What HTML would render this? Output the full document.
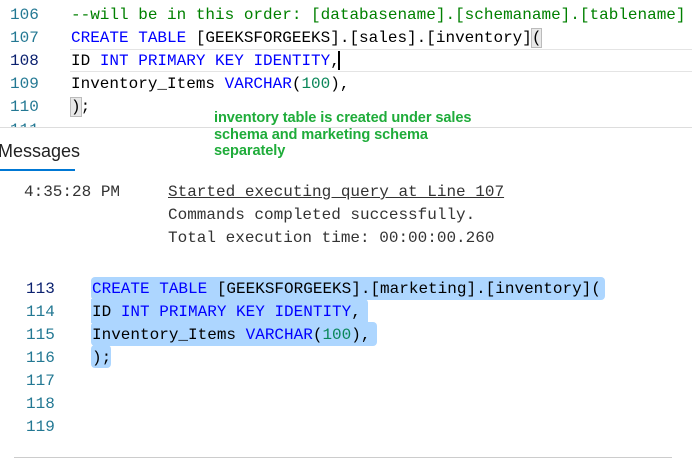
<!DOCTYPE html>
<html><head><style>
body{margin:0;width:692px;height:471px;background:#fff;position:relative;overflow:hidden;font-family:"Liberation Mono",monospace;font-size:16px}
.l{position:absolute;white-space:pre;line-height:23px;height:23px}
.n{color:#237893}
.k{color:#0000ff}.c{color:#008000}.g{color:#098658}.t{color:#000}
.m{color:#333}
.sel{position:absolute;background:#add6ff;border-radius:4px}
.ann{position:absolute;left:214px;font-family:"Liberation Sans",sans-serif;font-weight:bold;font-size:14.6px;color:#1fac3a;line-height:16.5px;letter-spacing:-0.1px}
</style></head><body>
<div class="l n" style="left:10px;top:4px">106</div>
<div class="l c" style="left:71px;top:4px">--will be in this order: [databasename].[schemaname].[tablename]</div>
<div class="l n" style="left:10px;top:27px">107</div>
<div class="l" style="left:71px;top:27px"><span class="k">CREATE TABLE</span> [GEEKSFORGEEKS].[sales].[inventory]<span style="background:#e8e8e8;outline:1px solid #bbb">(</span></div>
<div style="position:absolute;left:70px;top:49px;width:622px;height:21px;border-top:1px solid #e4e4e4;border-bottom:1px solid #e4e4e4"></div>
<div class="l n" style="left:10px;top:50px;color:#0b216f">108</div>
<div class="l" style="left:71px;top:50px">ID <span class="k">INT PRIMARY KEY IDENTITY</span>,</div>
<div style="position:absolute;left:338px;top:51px;width:2px;height:19px;background:#000"></div>
<div class="l n" style="left:10px;top:73px">109</div>
<div class="l" style="left:71px;top:73px">Inventory_Items <span class="k">VARCHAR</span>(<span class="g">100</span>),</div>
<div class="l n" style="left:10px;top:96px">110</div>
<div class="l" style="left:71px;top:96px"><span style="background:#e8e8e8;outline:1px solid #bbb">)</span>;</div>
<div class="l n" style="left:10px;top:119px;height:8px;overflow:hidden">111</div>
<div style="position:absolute;left:0;top:127px;width:692px;height:1px;background:#ddd"></div>
<div class="ann" style="top:110px">inventory table is created under sales<br>schema and marketing schema<br>separately</div>
<div style="position:absolute;left:-2px;top:141px;font-family:'Liberation Sans',sans-serif;font-size:18px;color:#222">Messages</div>
<div style="position:absolute;left:0;top:169px;width:75px;height:2px;background:#0078d4"></div>
<div class="l m" style="left:24px;top:181px">4:35:28 PM</div>
<div class="l m" style="left:168px;top:181px;text-decoration:underline">Started executing query at Line 107</div>
<div class="l m" style="left:168px;top:204px">Commands completed successfully.</div>
<div class="l m" style="left:168px;top:227px">Total execution time: 00:00:00.260</div>
<div class="sel" style="left:91px;top:277px;width:514px;height:23px"></div>
<div class="sel" style="left:91px;top:299px;width:277px;height:24px;border-radius:0 4px 0 0"></div>
<div class="sel" style="left:91px;top:322px;width:286px;height:24px"></div>
<div class="sel" style="left:91px;top:345px;width:20px;height:23px"></div>
<div class="l n" style="left:26px;top:278px;color:#0b216f">113</div>
<div class="l" style="left:92px;top:278px"><span class="k">CREATE TABLE</span> [GEEKSFORGEEKS].[marketing].[inventory](</div>
<div class="l n" style="left:26px;top:301px">114</div>
<div class="l" style="left:92px;top:301px">ID <span class="k">INT PRIMARY KEY IDENTITY</span>,</div>
<div class="l n" style="left:26px;top:324px">115</div>
<div class="l" style="left:92px;top:324px">Inventory_Items <span class="k">VARCHAR</span>(<span class="g">100</span>),</div>
<div class="l n" style="left:26px;top:347px">116</div>
<div class="l" style="left:92px;top:347px">);</div>
<div class="l n" style="left:26px;top:370px">117</div>
<div class="l n" style="left:26px;top:393px">118</div>
<div class="l n" style="left:26px;top:416px">119</div>
<div style="position:absolute;left:14px;top:457px;width:658px;height:1px;background:#ccc"></div>
</body></html>
